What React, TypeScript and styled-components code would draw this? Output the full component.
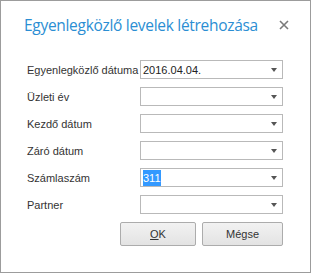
import React from "react";
import styled, { createGlobalStyle } from "styled-components";

const GlobalStyle = createGlobalStyle`
  html, body {
    margin: 0;
    padding: 0;
    background: #ffffff;
  }
`;

const Dialog = styled.div`
  width: 311px;
  height: 273px;
  box-sizing: border-box;
  border: 1px solid #9c9c9c;
  background: #ffffff;
  font-family: "Liberation Sans", Arial, sans-serif;
  font-size: 11px;
  color: #333333;
`;

const Header = styled.div`
  display: flex;
  align-items: center;
  justify-content: space-between;
  height: 40px;
  padding: 8px 21px 0 23px;
  box-sizing: border-box;
`;

const Title = styled.div`
  font-family: "Open Sans", "Noto Sans", sans-serif;
  font-size: 15.5px;
  color: #2b8ed3;
  letter-spacing: -0.3px;
`;

const Close = styled.button`
  border: none;
  background: none;
  padding: 0;
  width: 10px;
  height: 10px;
  display: flex;
  cursor: pointer;
`;

const Form = styled.div`
  display: grid;
  grid-template-columns: 113px 143px;
  grid-auto-rows: 19px;
  row-gap: 8px;
  padding: 19px 0 0 26px;
`;

const Label = styled.label`
  display: flex;
  align-items: center;
  white-space: nowrap;
  color: #333333;
`;

const Combo = styled.div`
  display: flex;
  align-items: center;
  border: 1px solid #b9b9b9;
  background: #ffffff;
  box-sizing: border-box;
  padding: 0 5px 0 2px;
`;

const Value = styled.span<{ $selected?: boolean }>`
  flex: 1;
  color: ${(p) => (p.$selected ? "#ffffff" : "#222222")};
  span {
    background: ${(p) => (p.$selected ? "#3399ff" : "transparent")};
    padding: 2px 0;
  }
`;

const Arrow = styled.span`
  width: 0;
  height: 0;
  border-left: 3px solid transparent;
  border-right: 3px solid transparent;
  border-top: 4px solid #555555;
`;

const Buttons = styled.div`
  display: flex;
  justify-content: flex-end;
  gap: 6px;
  padding: 8px 27px 0 0;
`;

const Button = styled.button<{ $w: number }>`
  width: ${(p) => p.$w}px;
  height: 24px;
  border: 1px solid #acacac;
  border-radius: 2px;
  background: linear-gradient(#f2f2f2, #e3e3e3);
  font-family: "Liberation Sans", Arial, sans-serif;
  font-size: 11px;
  color: #333333;
  padding: 0;
  u {
    text-decoration: underline;
  }
`;

type Row = { label: string; value?: string; selected?: boolean };

const rows: Row[] = [
  { label: "Egyenlegközlő dátuma", value: "2016.04.04." },
  { label: "Üzleti év" },
  { label: "Kezdő dátum" },
  { label: "Záró dátum" },
  { label: "Számlaszám", value: "311", selected: true },
  { label: "Partner" },
];

export default function App() {
  return (
    <>
      <GlobalStyle />
      <Dialog>
        <Header>
          <Title>Egyenlegközlő levelek létrehozása</Title>
          <Close aria-label="Bezárás">
            <svg width="10" height="10" viewBox="0 0 10 10">
              <path d="M1 1L9 9M9 1L1 9" stroke="#7a7a7a" strokeWidth="1.6" />
            </svg>
          </Close>
        </Header>
        <Form>
          {rows.map((r) => (
            <React.Fragment key={r.label}>
              <Label>{r.label}</Label>
              <Combo>
                <Value $selected={r.selected}>
                  <span>{r.value}</span>
                </Value>
                <Arrow />
              </Combo>
            </React.Fragment>
          ))}
        </Form>
        <Buttons>
          <Button $w={76}>
            <u>O</u>K
          </Button>
          <Button $w={81}>Mégse</Button>
        </Buttons>
      </Dialog>
    </>
  );
}
